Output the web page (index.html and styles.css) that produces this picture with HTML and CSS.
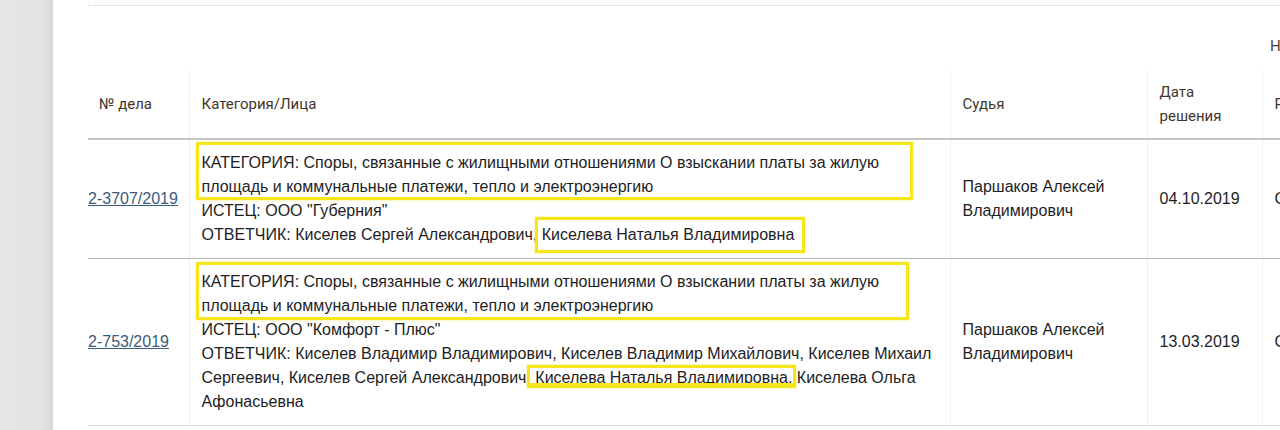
FILE: index.html
```html
<!DOCTYPE html>
<html lang="ru">
<head>
<meta charset="utf-8">
<title>Дела</title>
<link rel="stylesheet" href="styles.css">
</head>
<body>
<div class="page">
  <aside class="side"></aside>
  <main class="main">
    <div class="topline"></div>
    <div class="found">Найдено дел: 2</div>
    <table class="cases">
      <colgroup>
        <col class="c-num"><col class="c-cat"><col class="c-judge"><col class="c-date"><col class="c-res">
      </colgroup>
      <thead>
        <tr>
          <th class="num">№ дела</th>
          <th>Категория/Лица</th>
          <th>Судья</th>
          <th>Дата<br>решения</th>
          <th>Решение</th>
        </tr>
      </thead>
      <tbody>
        <tr>
          <td class="num"><a href="#">2-3707/2019</a></td>
          <td class="cat">
            <div class="cat-inner">
              КАТЕГОРИЯ: Споры, связанные с жилищными отношениями О взыскании платы за жилую площадь и коммунальные платежи, тепло и электроэнергию<br>
              ИСТЕЦ: ООО "Губерния"<br>
              ОТВЕТЧИК: Киселев Сергей Александрович, Киселева Наталья Владимировна
              <span class="mark m1"></span>
              <span class="mark m2"></span>
            </div>
          </td>
          <td>Паршаков Алексей Владимирович</td>
          <td>04.10.2019</td>
          <td>Судебный приказ</td>
        </tr>
        <tr>
          <td class="num"><a href="#">2-753/2019</a></td>
          <td class="cat">
            <div class="cat-inner">
              КАТЕГОРИЯ: Споры, связанные с жилищными отношениями О взыскании платы за жилую площадь и коммунальные платежи, тепло и электроэнергию<br>
              ИСТЕЦ: ООО "Комфорт - Плюс"<br>
              ОТВЕТЧИК: Киселев Владимир Владимирович, Киселев Владимир Михайлович, Киселев Михаил Сергеевич, Киселев Сергей Александрович, Киселева Наталья Владимировна, Киселева Ольга Афонасьевна
              <span class="mark m3"></span>
              <span class="mark m4"></span>
            </div>
          </td>
          <td>Паршаков Алексей Владимирович</td>
          <td>13.03.2019</td>
          <td>Судебный приказ</td>
        </tr>
      </tbody>
    </table>
  </main>
</div>
</body>
</html>
```
FILE: styles.css
```css
html, body {
  margin: 0;
  padding: 0;
  overflow: hidden;
  background: #fff;
}
.page {
  display: flex;
  width: 1500px;
  height: 430px;
}
.side {
  width: 53px;
  flex: none;
  background: linear-gradient(to right, #e6e6e6 0%, #e3e3e3 80%, #d8d8d8 100%);
}
.main {
  flex: none;
  padding-left: 35px;
  padding-top: 5px;
}
.topline {
  width: 1400px;
  border-top: 1px dotted #cfcfcf;
}
.found {
  margin-top: 29px;
  padding-left: 1182px;
  height: 22px;
  font-family: Roboto, "Liberation Sans", sans-serif;
  font-size: 15px;
  line-height: 22px;
  color: #4a3d33;
  white-space: nowrap;
}
.cases {
  margin-top: 13px;
  border-collapse: collapse;
  table-layout: fixed;
  width: 1374px;
}
.c-num { width: 101px; }
.c-cat { width: 761px; }
.c-judge { width: 197px; }
.c-date { width: 115px; }
.c-res { width: 200px; }
th {
  height: 68px;
  padding: 0 12px;
  text-align: left;
  font-family: Roboto, "Liberation Sans", sans-serif;
  font-weight: 400;
  font-size: 15px;
  line-height: 24px;
  color: #43352b;
  vertical-align: middle;
  border-bottom: 2px solid #c4c4c4;
  border-left: 1px solid #f1f1f1;
}
th.num {
  padding-left: 11px;
  border-left: none;
}
td {
  padding: 11px 12px;
  font-family: "Liberation Sans", Arial, sans-serif;
  font-size: 16px;
  line-height: 24px;
  color: #1e1e1e;
  vertical-align: middle;
  border-left: 1px solid #efefef;
  border-bottom: 1px solid #b4b4b4;
}
tbody tr:last-child td {
  border-bottom: 1px solid #dcdcdc;
}
td.num {
  padding-left: 0;
  padding-right: 0;
  border-left: none;
  white-space: nowrap;
}
td.num a {
  color: #3b5b7a;
  text-decoration: underline;
}
.cat-inner {
  position: relative;
}
.mark {
  position: absolute;
  border: 3px solid #f7e51c;
  box-shadow: 0 0 2px rgba(247, 229, 28, 0.7);
  pointer-events: none;
}
.m1 { left: -6px; top: -9px; width: 711px; height: 52px; }
.m2 { left: 333px; top: 66px; width: 264px; height: 30px; }
.m3 { left: -6px; top: -8px; width: 707px; height: 52px; }
.m4 { left: 325px; top: 95px; width: 263px; height: 15px; border-bottom-width: 5px; }
```
